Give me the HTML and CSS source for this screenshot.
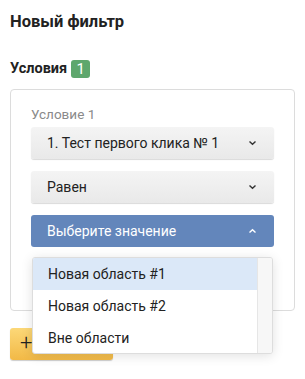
FILE: index.html
```html
<!DOCTYPE html>
<html>
<head>
	<meta charset='utf-8'>
	<title>Новый фильтр</title>
	<link rel="stylesheet" href="styles.css">
</head>
<body>
	<h1 class="title">Новый фильтр</h1>
	<h2 class="subtitle">Условия <span class="badge">1</span></h2>

	<div class="card">
		<div class="cond_label">Условие 1</div>
		<div class="select">
			<span>1. Тест первого клика № 1</span>
			<svg class="chev" width="9" height="6" viewBox="0 0 9 6"><path d="M1.5 1.5 L4.5 4.3 L7.5 1.5" fill="none" stroke="#333" stroke-width="1.4"/></svg>
		</div>
		<div class="select">
			<span>Равен</span>
			<svg class="chev" width="9" height="6" viewBox="0 0 9 6"><path d="M1.5 1.5 L4.5 4.3 L7.5 1.5" fill="none" stroke="#333" stroke-width="1.4"/></svg>
		</div>
		<div class="select_wrap">
			<div class="select select_open">
				<span>Выберите значение</span>
				<svg class="chev" width="9" height="6" viewBox="0 0 9 6"><path d="M1.5 4.5 L4.5 1.7 L7.5 4.5" fill="none" stroke="#fff" stroke-width="1.4"/></svg>
			</div>
			<div class="dropdown">
				<ul class="options">
					<li class="option option_hover">Новая область #1</li>
					<li class="option">Новая область #2</li>
					<li class="option">Вне области</li>
				</ul>
				<div class="scroll_track"></div>
			</div>
		</div>
	</div>

	<button class="add_btn">+</button>
</body>
</html>
```

FILE: styles.css
```css
body {
	margin: 0;
	padding: 10px;
	font-family: Roboto, "Noto Sans", sans-serif;
	color: #222;
	background: #fff;
}
.title {
	font-size: 16.5px;
	font-weight: bold;
	line-height: 20px;
	margin: 2px 0 0;
}
.subtitle {
	font-size: 14.5px;
	font-weight: bold;
	line-height: 18px;
	margin: 28px 0 0;
	display: flex;
	align-items: center;
	gap: 4px;
}
.badge {
	display: inline-block;
	background: #5ea76d;
	color: #fff;
	font-weight: normal;
	font-size: 15px;
	line-height: 18px;
	width: 19px;
	text-align: center;
	border-radius: 3px;
}
.card {
	margin-top: 11px;
	border: 1px solid #dcdcdc;
	border-radius: 4px;
	padding: 16px 20px 63px;
	display: flex;
	flex-direction: column;
	gap: 12px;
}
.cond_label {
	font-size: 13.5px;
	color: #8a8a8a;
	line-height: 17px;
	margin-bottom: -8px;
}
.select {
	height: 32px;
	box-sizing: border-box;
	border-radius: 3px;
	background: linear-gradient(#f4f4f4, #e9e9e9);
	box-shadow: 0 1px 1px rgba(0, 0, 0, 0.15);
	display: flex;
	align-items: center;
	justify-content: space-between;
	padding: 0 17px 0 16px;
	font-size: 14px;
	color: #222;
}
.select_wrap {
	position: relative;
}
.select_open {
	background: #6386bb;
	color: #fff;
	box-shadow: none;
}
.dropdown {
	position: absolute;
	top: 42px;
	left: 1px;
	width: 241px;
	height: 97px;
	background: #fff;
	border: 1px solid #ddd;
	border-radius: 3px;
	box-sizing: border-box;
	box-shadow: 0 2px 12px rgba(0, 0, 0, 0.12);
	display: flex;
	overflow: hidden;
	z-index: 2;
}
.options {
	list-style: none;
	margin: 0;
	padding: 0;
	flex: 1;
}
.option {
	height: 32px;
	line-height: 32px;
	padding-left: 15px;
	font-size: 14px;
	color: #222;
}
.option_hover {
	background: #dbe8f8;
}
.scroll_track {
	width: 14px;
	background: #f7f7f7;
	border-left: 1px solid #e6e6e6;
}
.add_btn {
	margin-top: 17px;
	width: 103px;
	height: 32px;
	border: 0;
	border-radius: 3px;
	background: linear-gradient(#fcd878, #f2b946);
	box-shadow: 0 1px 1px rgba(0, 0, 0, 0.2);
	font: 300 22px Roboto, sans-serif;
	color: #222;
	text-align: left;
	padding: 0 0 3px 10px;
}
```
